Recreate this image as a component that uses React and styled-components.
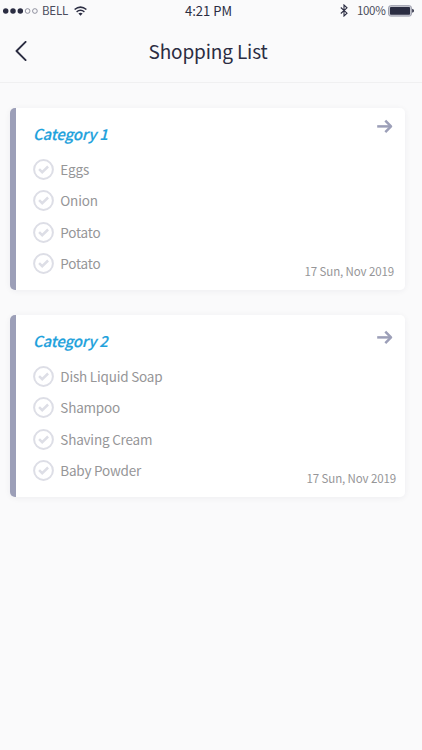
import styled, { createGlobalStyle } from "styled-components"

const COLORS = {
    BG: "#fafafb",
    INK: "#2b2d42",
    TEXT: "#969698",
    BLUE: "#1fa2dc",
    ACCENT: "#9c9fb8",
    RING: "#dddee6",
}

const lists = [
    {
        name: "Category 1",
        items: ["Eggs", "Onion", "Potato", "Potato"],
        date: "17 Sun, Nov 2019",
        arrowTop: 11,
        dateRight: 11,
    },
    {
        name: "Category 2",
        items: ["Dish Liquid Soap", "Shampoo", "Shaving Cream", "Baby Powder"],
        date: "17 Sun, Nov 2019",
        arrowTop: 15,
        dateRight: 9,
    },
]

const Signal = () => (
    <svg width="35" height="6" viewBox="0 0 35 6">
        {[2.7, 10, 17.3].map((x) => <circle key={x} cx={x} cy="3" r="2.75" fill={COLORS.INK} />)}
        {[24.6, 31.9].map((x) => (
            <circle key={x} cx={x} cy="3" r="2.35" fill="none" stroke="#77798a" strokeWidth="0.8" />
        ))}
    </svg>
)

const Wifi = () => (
    <svg width="13" height="10" viewBox="0 0 13 10" fill="none" stroke={COLORS.INK}>
        <path d="M0.6 3.5 Q6.5 -1.4 12.4 3.5" strokeWidth="1.6" />
        <path d="M2.6 5.9 Q6.5 2.7 10.4 5.9" strokeWidth="1.4" />
        <path d="M4.4 7.6 Q6.5 6.1 8.6 7.6 L6.5 9.8Z" fill={COLORS.INK} stroke="none" />
    </svg>
)

const Bluetooth = () => (
    <svg width="8" height="13" viewBox="0 0 8 13" fill="none" stroke={COLORS.INK} strokeWidth="1.1">
        <path d="M0.8 3.5 L7 9.2 L4 12 V1 L7 3.8 L0.8 9.5" />
    </svg>
)

const Battery = () => (
    <svg width="26" height="12" viewBox="0 0 26 12">
        <rect x="0.6" y="0.7" width="22.8" height="10.4" rx="2" fill="#c9cad3" stroke="#9a9cab" strokeWidth="1" />
        <rect x="2" y="2" width="20" height="7.8" rx="0.8" fill={COLORS.INK} />
        <path d="M24.2 3.8 Q26 4.3 26 5.8 Q26 7.3 24.2 7.8Z" fill={COLORS.INK} />
    </svg>
)

const Check = () => (
    <svg width="21" height="21" viewBox="0 0 21 21" fill="none" stroke={COLORS.RING}>
        <circle cx="10.5" cy="10.5" r="9.4" strokeWidth="2" />
        <path d="M6.1 10.2 L9.2 13.2 L15.1 7.5" strokeWidth="2.5" />
    </svg>
)

const Arrow = () => (
    <svg width="16" height="14" viewBox="0 0 16 14" fill="none" stroke={COLORS.ACCENT} strokeWidth="2.5">
        <path d="M0.2 7.4 H14" />
        <path d="M8.3 1.7 L14 7.4 L8.3 13.1" strokeLinejoin="round" />
    </svg>
)

const App = () => (
    <Screen>
        <GlobalStyle />
        <StatusBar>
            <Carrier>
                <Signal />
                <StatusText $spacing="-0.2px">BELL</StatusText>
                <Wifi />
            </Carrier>
            <Clock>4:21 PM</Clock>
            <Power>
                <Bluetooth />
                <StatusText $spacing="-0.3px">100%</StatusText>
                <Battery />
            </Power>
        </StatusBar>

        <Header>
            <Back aria-label="Back">
                <svg width="12" height="20" viewBox="0 0 12 20" fill="none" stroke={COLORS.INK} strokeWidth="1.9">
                    <path d="M10.6 0.9 L1.5 10 L10.6 19.1" strokeLinecap="round" strokeLinejoin="round" />
                </svg>
            </Back>
            <Title>Shopping List</Title>
        </Header>

        <Lists>
            {lists.map(({ name, items, date, arrowTop, dateRight }) => (
                <Card key={name}>
                    <Content>
                        <Category>{name}</Category>
                        <Items>
                            {items.map((item, i) => (
                                <Item key={i}>
                                    <Check />
                                    <ItemName>{item}</ItemName>
                                </Item>
                            ))}
                        </Items>
                    </Content>
                    <Side $top={arrowTop}>
                        <Open aria-label="Open list"><Arrow /></Open>
                        <Date $right={dateRight}>{date}</Date>
                    </Side>
                </Card>
            ))}
        </Lists>
    </Screen>
)

export default App

const GlobalStyle = createGlobalStyle`
    * {
        box-sizing: border-box;
    }

    body {
        margin: 0;
        background: ${COLORS.BG};
        font-family: "Noto Sans CJK SC", "Noto Sans", sans-serif;
    }

    svg {
        display: block;
        flex-shrink: 0;
    }

    button {
        border: none;
        background: transparent;
        padding: 0;
    }
`

const Screen = styled.div`
    height: 750px;
    overflow: hidden;
    background: ${COLORS.BG};
    color: ${COLORS.INK};
`

const StatusBar = styled.div`
    height: 21px;
    display: grid;
    grid-template-columns: 1fr auto 1fr;
    align-items: center;
    padding: 0 8px 0 3px;
`

const Carrier = styled.div`
    display: flex;
    align-items: center;
    gap: 4px;

    svg:last-child {
        margin-left: 2px;
    }
`

const Power = styled.div`
    display: flex;
    align-items: center;
    justify-content: flex-end;
    gap: 2.5px;

    svg:first-child {
        margin-right: 6px;
    }
`

const StatusText = styled.span`
    font-size: 11.5px;
    line-height: 21px;
    letter-spacing: ${props => props.$spacing};
    color: #4a4c5c;
`

const Clock = styled.span`
    margin-bottom: 1px;
    font-size: 13px;
    line-height: 19px;
`

const Header = styled.header`
    height: 62px;
    display: grid;
    grid-template-columns: 40px 1fr 40px;
    align-items: center;
    border-bottom: 1px solid #f0f0f1;
`

const Back = styled.button`
    padding: 0 0 2px 15px;
`

const Title = styled.h1`
    margin: 0 6px 1px 0;
    text-align: center;
    font-size: 19px;
    font-weight: 400;
    letter-spacing: -0.15px;
    line-height: 28px;
`

const Lists = styled.main`
    display: flex;
    flex-direction: column;
    gap: 25px;
    padding: 25px 17px 0 10px;
`

const Card = styled.section`
    height: 182px;
    display: flex;
    justify-content: space-between;
    background: linear-gradient(90deg, ${COLORS.ACCENT} 5.5px, #fff 6px);
    border-radius: 5px;
    box-shadow: 0 1px 6px rgba(40, 40, 60, 0.06);
`

const Content = styled.div`
    padding: 14px 0 0 23px;
`

const Category = styled.h2`
    margin: 0;
    font-size: 15px;
    font-weight: 500;
    font-style: italic;
    letter-spacing: -0.15px;
    line-height: 24px;
    color: ${COLORS.BLUE};
    -webkit-text-stroke: 0.2px ${COLORS.BLUE};
`

const Items = styled.ul`
    list-style: none;
    margin: 12.8px 0 0;
    padding: 0;
    display: flex;
    flex-direction: column;
    gap: 10.4px;
`

const Item = styled.li`
    height: 21px;
    display: flex;
    align-items: center;
    gap: 6.3px;
`

const ItemName = styled.span`
    padding-bottom: 1px;
    font-size: 13.5px;
    letter-spacing: -0.2px;
    line-height: 20px;
    color: ${COLORS.TEXT};
`

const Side = styled.div`
    display: flex;
    flex-direction: column;
    align-items: flex-end;
    justify-content: space-between;
    padding: ${props => props.$top}px 0 10px;
`

const Open = styled.button`
    margin-right: 12px;
`

const Date = styled.time`
    margin-right: ${props => props.$right}px;
    font-size: 11.5px;
    letter-spacing: -0.12px;
    line-height: 18px;
    color: ${COLORS.TEXT};
`
